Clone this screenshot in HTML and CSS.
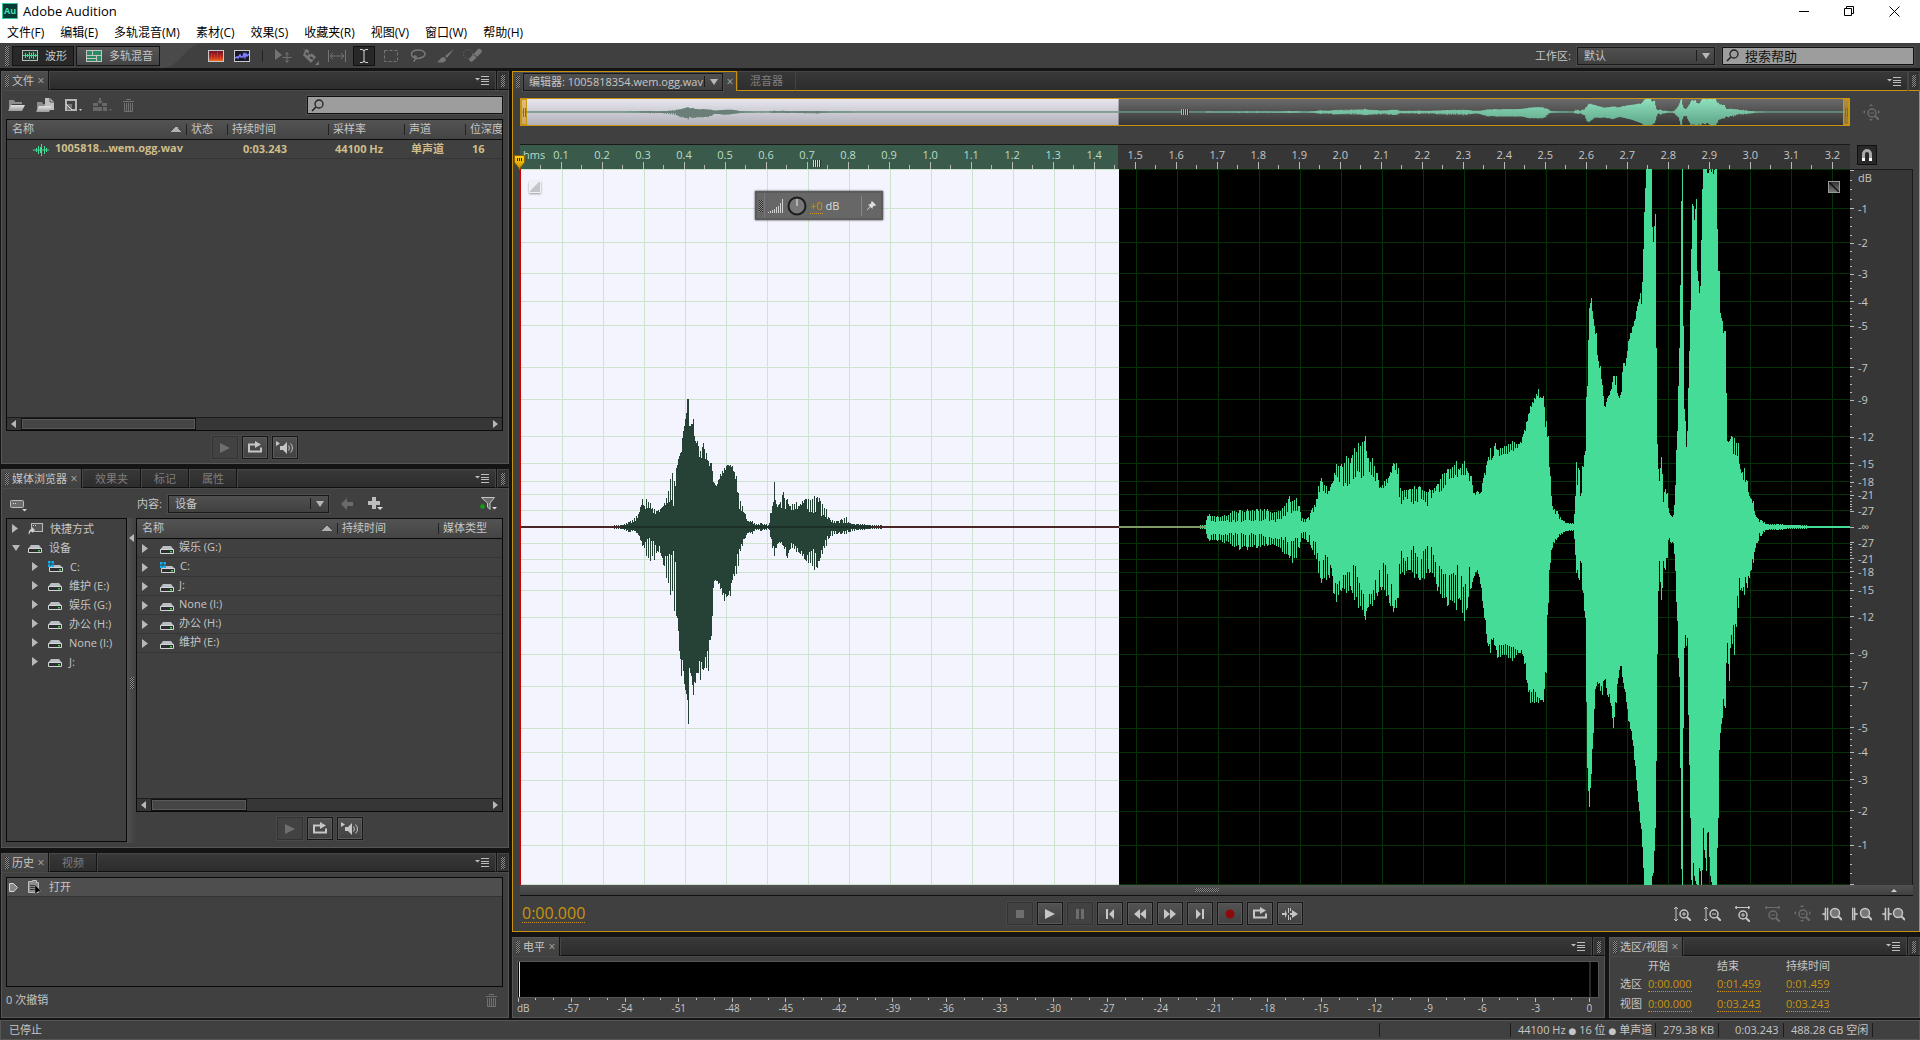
FILE: index.html
```html
<!DOCTYPE html>
<html lang="zh-CN">
<head>
  <meta charset="UTF-8">
  <meta name="viewport" content="width=device-width, initial-scale=1.0">
  <title>Adobe Audition</title>
  <link rel="stylesheet" href="styles.css">
</head>
<body>
  <svg class="sprite" aria-hidden="true">
    <defs>
      <linearGradient id="metal" x1="0" y1="0" x2="0" y2="1">
        <stop offset="0" stop-color="#e2e2e2"/><stop offset="1" stop-color="#9a9a9a"/>
      </linearGradient>
      <linearGradient id="fire" x1="0" y1="0" x2="0" y2="1">
        <stop offset="0" stop-color="#6c1428"/><stop offset=".6" stop-color="#b82a20"/><stop offset="1" stop-color="#f08020"/>
      </linearGradient>
      <linearGradient id="yellow" x1="0" y1="0" x2="0" y2="1">
        <stop offset="0" stop-color="#ffd21c"/><stop offset="1" stop-color="#c88f00"/>
      </linearGradient>
    </defs>
    <symbol id="i-wave" viewBox="0 0 16 12"><path d="M0 6h16M3.500 4v4M5.500 2v8M7.500 3v6M8.500 0v12M11.500 2v8M13.500 4v4" stroke="#45dc98" fill="none"/></symbol>
    <symbol id="i-waveform" viewBox="0 0 16 11"><rect x=".5" y=".5" width="15" height="10" fill="#1f3d30" stroke="#b9b9b9"/><path d="M1 5.500h14M3.500 3v5M5.500 4v3M7.500 2v7M9.500 3v5M11.500 2v7M13.500 4v3" stroke="#45dc98"/></symbol>
    <symbol id="i-multi" viewBox="0 0 16 12"><rect width="16" height="12" fill="#c4c4c4"/><path d="M1 1h5v4H1zM7 1h8v4H7zM1 6h9v2H1zM1 9h9v2H1zM11 6h4v5h-4z" fill="#2a8a61"/></symbol>
    <symbol id="i-spectral" viewBox="0 0 16 12"><rect x=".5" y=".5" width="15" height="11" fill="url(#fire)" stroke="#c9c9c9"/><path d="M3.500 3v8M6.500 4v7M9.500 2v9M12.500 5v6" stroke="#f0481c" opacity=".6"/></symbol>
    <symbol id="i-pitch" viewBox="0 0 16 12"><rect x=".5" y=".5" width="15" height="11" fill="#181828" stroke="#c9c9c9"/><path d="M1 8l2-1 1 1 2-3 1 2 2 0 1-4 1 4 1-3 1 2 2-2" fill="none" stroke="#8080ff" stroke-width="1.500"/></symbol>
    <symbol id="i-move" viewBox="0 0 18 14"><path d="M1 0l7 6-7 5z" fill="#737373"/><path d="M13 4v9M8.500 8.500h9M11.500 5.500l1.500-2 1.500 2M11.500 11.500l1.500 2 1.500-2" fill="none" stroke="#737373"/></symbol>
    <symbol id="i-razor" viewBox="0 0 18 18"><path d="M1 0l3 3 2-1 9 8-5 6-8-8 2-4z" fill="#777"/><path d="M5 6l2 2M8 5l2 2M9 10l3 2" stroke="#3c3c3c" stroke-width="2"/><path d="M18 14v4h-4z" fill="#777"/></symbol>
    <symbol id="i-slip" viewBox="0 0 18 12"><path d="M.5 0v12M17.500 0v12M2 6h14M5 3L2 6l3 3M13 3l3 3-3 3" fill="none" stroke="#737373"/></symbol>
    <symbol id="i-ibeam" viewBox="0 0 10 14"><path d="M1 .5h2l2 1 2-1h2M5 1v12M1 13.500h2l2-1 2 1h2" fill="none" stroke="#d6d6d6"/></symbol>
    <symbol id="i-marquee" viewBox="0 0 14 12"><rect x=".5" y=".5" width="13" height="11" fill="none" stroke="#777" stroke-dasharray="3 2"/></symbol>
    <symbol id="i-lasso" viewBox="0 0 16 14"><path d="M5 9C-1 7 1 1 8 1s9 5 5 7-8 2-9 0c0-2 3-1 2 1s-2 2-2 4" fill="none" stroke="#777" stroke-width="1.500"/></symbol>
    <symbol id="i-brush" viewBox="0 0 17 14"><path d="M17 0l-7 9-2-2zM7 8l2 2c0 4-5 4-9 3 3-1 3-5 7-5z" fill="#777"/></symbol>
    <symbol id="i-heal" viewBox="0 0 19 15"><path d="M7 10l8-9c3-1 5 2 3 4l-8 8c-3 2-5-1-3-3z" fill="#777"/><circle cx="5" cy="6" r="4.500" fill="none" stroke="#777" stroke-dasharray="1 2"/><path d="M11 7l3 2" stroke="#444"/></symbol>
    <symbol id="i-search" viewBox="0 0 13 13"><circle cx="8" cy="5" r="4" fill="none" stroke="#222" stroke-width="1.300"/><path d="M5 8L1 12" stroke="#222" stroke-width="1.600"/></symbol>
    <symbol id="i-menu" viewBox="0 0 14 9"><path d="M0 2h5L2.500 4.500z" fill="#bdbdbd"/><path d="M6 .5h8M6 3.500h8M6 5.500h8M6 8.500h8" stroke="#bdbdbd"/></symbol>
    <symbol id="i-open" viewBox="0 0 17 13"><path d="M1 11V1h5l1 2h7v2H4z" fill="#8d8d8d"/><path d="M0 12l3-6h14l-3 6z" fill="url(#metal)"/></symbol>
    <symbol id="i-import" viewBox="0 0 18 15"><path d="M1 13V4h5l1 2h9v2H4z" fill="#8d8d8d"/><path d="M9 0h5l4 4v8H9z" fill="#bdbdbd"/><path d="M14 0v4h4" fill="none" stroke="#555"/><path d="M0 14l3-6h13l-3 6z" fill="url(#metal)"/></symbol>
    <symbol id="i-new" viewBox="0 0 17 14"><rect x="1" y="2" width="10" height="10" fill="none" stroke="#b5b5b5" stroke-width="2"/><path d="M2 6h5v6H2z" fill="#777"/><path d="M1 6l6 6" stroke="#ddd"/><path d="M14 11h3l-1.500 2z" fill="#d0d0d0"/></symbol>
    <symbol id="i-insert" viewBox="0 0 19 14"><path d="M0 5h5v3H0zM9 5h5v3H9zM0 9h9v4H0zM10 9h4v4h-4zM6 0h2v3h2L7 6 4 3h2z" fill="#686868"/><path d="M16 11h3l-1.500 2z" fill="#686868"/></symbol>
    <symbol id="i-trash" viewBox="0 0 11 13"><path d="M0 2.500h11M3 .5h5M1.500 4v8.500h8V4M3.500 4v8M5.500 4v8M7.500 4v8" fill="none" stroke="#707070"/></symbol>
    <symbol id="i-play" viewBox="0 0 14 12"><path d="M2 1l10 5-10 5z"/></symbol>
    <symbol id="i-loop" viewBox="0 0 16 13"><path d="M6 3.500H2v7h12v-4" fill="none" stroke="currentColor" stroke-width="2"/><path d="M8 0l6 3.500L8 7z"/><path d="M6 3.500h4" stroke="currentColor" stroke-width="2"/></symbol>
    <symbol id="i-speaker" viewBox="0 0 18 14"><path d="M0 0l4 2.500L0 5zM4 5h3l4-4v12L7 9H4z"/><path d="M12.500 4.500q2 2.500 0 5M14.500 2.500q4 4.500 0 9" fill="none" stroke="currentColor"/></symbol>
    <symbol id="i-stop" viewBox="0 0 14 12"><path d="M3 2h8v8H3z"/></symbol>
    <symbol id="i-pause" viewBox="0 0 14 12"><path d="M3 1h3v10H3zM8 1h3v10H8z"/></symbol>
    <symbol id="i-start" viewBox="0 0 14 12"><path d="M3 1h2v10H3zM11 1v10L6 6z"/></symbol>
    <symbol id="i-rew" viewBox="0 0 14 12"><path d="M7 1v10L1 6zM13 1v10L7 6z"/></symbol>
    <symbol id="i-ff" viewBox="0 0 14 12"><path d="M1 1v10l6-5zM7 1v10l6-5z"/></symbol>
    <symbol id="i-end" viewBox="0 0 14 12"><path d="M3 1v10l5-5zM9 1h2v10H9z"/></symbol>
    <symbol id="i-rec" viewBox="0 0 14 12"><circle cx="7" cy="6" r="4.500" fill="#8c0a0e"/></symbol>
    <symbol id="i-skip" viewBox="0 0 16 12"><path d="M0 5h3V2l2 4-2 4V7H0zM10 2l6 4-6 4V7H8V5h2zM6 0h1v5H6zM6 7h1v5H6zM8 0h1v3H8zM8 9h1v3H8z"/></symbol>
    <symbol id="i-shortcut" viewBox="0 0 15 12"><rect x="3.500" y=".5" width="11" height="8" fill="#555" stroke="#bbb"/><path d="M5 2.500h1M7 2.500h1" stroke="#ccc"/><path d="M1 12C0 8 2 6 4 6V4l3 3-3 3V8C2 8 2 10 1 12z" fill="#d0d0d0"/></symbol>
    <symbol id="i-drive" viewBox="0 0 14 12"><path d="M3 3h8l3 4H0z" fill="#b9bec4"/><path d="M.5 6.500h13v4H.5z" fill="#2c2e30" stroke="#d2d5d8"/><path d="M10 8h2v1.500h-2z" fill="#2ce02c"/></symbol>
    <symbol id="i-sysdrive" viewBox="0 0 15 12"><path d="M4 4h8l3 3H1z" fill="#b9bec4"/><path d="M1.500 6.500h13v4h-13z" fill="#2c2e30" stroke="#d2d5d8"/><path d="M11 8h2v1.500h-2z" fill="#2ce02c"/><path d="M0 0h2.500v2.500H0zM3.500 0H6v2.500H3.500zM0 3.500h2.500V6H0zM3.500 3.500H6V6H3.500z" fill="#0ab0f5"/></symbol>
    <symbol id="i-device" viewBox="0 0 17 12"><rect x=".5" y=".5" width="13" height="7" rx="1" fill="#6c6c6c" stroke="#bcbcbc"/><path d="M3 3.500h1M5 3.500h1" stroke="#ddd"/><path d="M12 9h5l-2.500 2.500z" fill="#d0d0d0"/></symbol>
    <symbol id="i-back" viewBox="0 0 12 12"><path d="M0 6l6-6v4h6v4H6v4z" fill="#6b6b6b"/></symbol>
    <symbol id="i-plus" viewBox="0 0 15 13"><path d="M4 0h4v4h4v4H8v4H4V8H0V4h4z" fill="#bdbdbd"/><path d="M9 10h6l-3 3z" fill="#ddd"/></symbol>
    <symbol id="i-filter" viewBox="0 0 17 13"><path d="M1.500 .5h13L10 6v6.500L7.500 10V6z" fill="#6b6b6b" stroke="#c4c4c4"/><circle cx="2.500" cy="9.500" r="2.300" fill="#12a012"/><path d="M12 10h5l-2.500 2.500z" fill="#ddd"/></symbol>
    <symbol id="i-history" viewBox="0 0 13 14"><path d="M.5 1.500h4V.5h4v2h2v10H.5z" fill="#8c8c8c" stroke="#bdbdbd"/><path d="M2 5.500h6M2 7.500h6M2 9.500h5" stroke="#333"/><path d="M7 5l6 6-3 .5-3 2.500z" fill="#000" stroke="#999" stroke-width=".5"/></symbol>
    <symbol id="i-state" viewBox="0 0 9 9"><path d="M.5 .5h4L8.500 4.500 5 8.500H.5z" fill="#888" stroke="#d8d8d8"/></symbol>
    <symbol id="i-tri" viewBox="0 0 6 9"><path d="M0 0l6 4.500L0 9z" fill="#b8b8b8"/></symbol>
    <symbol id="i-tridown" viewBox="0 0 8 6"><path d="M0 0h8L4 6z" fill="#b8b8b8"/></symbol>
    <symbol id="i-glass" viewBox="0 0 12 12"><circle cx="5" cy="5" r="4" fill="none" stroke="currentColor" stroke-width="1.500"/><path d="M8 8l4 4" stroke="currentColor" stroke-width="2"/></symbol>
    <symbol id="i-vin" viewBox="0 0 17 16"><path d="M2 1v14M0 3l2-2 2 2M0 13l2 2 2-2" fill="none" stroke="currentColor"/><use href="#i-glass" x="5" y="3" width="12" height="12"/><path d="M8 8h4M10 6v4" stroke="currentColor"/></symbol>
    <symbol id="i-vout" viewBox="0 0 17 16"><path d="M2 1v14M0 3l2-2 2 2M0 13l2 2 2-2" fill="none" stroke="currentColor"/><use href="#i-glass" x="5" y="3" width="12" height="12"/><path d="M8 8h4" stroke="currentColor"/></symbol>
    <symbol id="i-hin" viewBox="0 0 17 16"><path d="M1 1.500h15M3 0L1 1.500 3 3M14 0l2 1.500L14 3" fill="none" stroke="currentColor"/><use href="#i-glass" x="4" y="4" width="12" height="12"/><path d="M7 9h4M9 7v4" stroke="currentColor"/></symbol>
    <symbol id="i-hout" viewBox="0 0 17 16"><path d="M1 1.500h15M3 0L1 1.500 3 3M14 0l2 1.500L14 3" fill="none" stroke="currentColor"/><use href="#i-glass" x="4" y="4" width="12" height="12"/><path d="M7 9h4" stroke="currentColor"/></symbol>
    <symbol id="i-full" viewBox="0 0 17 17"><path d="M0 8l2-2v4zM17 8l-2-2v4zM8 0l2 2H6zM8 17l2-2H6z" fill="currentColor"/><use href="#i-glass" x="4" y="4" width="12" height="12"/><path d="M7 9h4" stroke="currentColor"/></symbol>
    <symbol id="i-zleft" viewBox="0 0 20 14"><path d="M4 1H3v5L0 7l3 1v5h1M5 1h1v12H5z" fill="currentColor" stroke="currentColor" stroke-width=".6"/><circle cx="13" cy="6" r="4.500" fill="#777" stroke="currentColor" stroke-width="1.500"/><path d="M16 9l4 4" stroke="currentColor" stroke-width="2"/></symbol>
    <symbol id="i-zright" viewBox="0 0 20 14"><path d="M0 1h1v12H0zM2 1h1v5l3 1-3 1v5H2z" fill="currentColor" stroke="currentColor" stroke-width=".6"/><circle cx="13" cy="6" r="4.500" fill="#777" stroke="currentColor" stroke-width="1.500"/><path d="M16 9l4 4" stroke="currentColor" stroke-width="2"/></symbol>
    <symbol id="i-zsel" viewBox="0 0 23 14"><path d="M3 1v5L0 7l3 1v5h1V1zM6 1v12h1V8l3-1-3-1V1z" fill="currentColor" stroke="currentColor" stroke-width=".6"/><circle cx="16" cy="6" r="4.500" fill="#777" stroke="currentColor" stroke-width="1.500"/><path d="M19 9l4 4" stroke="currentColor" stroke-width="2"/></symbol>
    <symbol id="i-magnet" viewBox="0 0 12 12"><path d="M2.500 9V5a3.500 3.500 0 0 1 7 0v4" fill="none" stroke="#a8a8a8" stroke-width="3"/><path d="M1 9h3v3H1zM8 9h3v3H8z" fill="#fff"/></symbol>
  </svg>

  <header class="titlebar">
    <svg class="app-icon" width="16" height="16" viewBox="0 0 16 16"><rect x=".5" y=".5" width="15" height="15" fill="#073a35" stroke="#35c8a0"/><text x="2" y="11" class="app-letters">Au</text></svg>
    <h1>Adobe Audition</h1>
    <div class="window-buttons">
      <button type="button" aria-label="最小化"><svg width="11" height="11"><path d="M0 5.500h10"/></svg></button>
      <button type="button" aria-label="还原"><svg width="11" height="11"><path d="M.5 2.500h7v7h-7zM2.500 2.500v-2h7v7h-2"/></svg></button>
      <button type="button" aria-label="关闭"><svg width="11" height="11"><path d="M.5 .5l10 10M10.500 .5l-10 10"/></svg></button>
    </div>
  </header>

  <nav class="menubar">
    <a href="#">文件(F)</a>
    <a href="#">编辑(E)</a>
    <a href="#">多轨混音(M)</a>
    <a href="#">素材(C)</a>
    <a href="#">效果(S)</a>
    <a href="#">收藏夹(R)</a>
    <a href="#">视图(V)</a>
    <a href="#">窗口(W)</a>
    <a href="#">帮助(H)</a>
  </nav>

  <div class="toolbar">
    <span class="grip grip-tall"></span>
    <div class="views">
      <button type="button" class="view view-on"><svg width="16" height="11"><use href="#i-waveform"/></svg>波形</button>
      <button type="button" class="view"><svg width="16" height="12"><use href="#i-multi"/></svg>多轨混音</button>
    </div>
    <svg class="swoosh" width="44" height="25" viewBox="0 0 44 25"><path d="M0 0h44C24 1 22 24 2 25H0z"/></svg>
    <div class="displays">
      <button type="button" class="tool" aria-label="频谱"><svg width="16" height="12"><use href="#i-spectral"/></svg></button>
      <button type="button" class="tool" aria-label="音高"><svg width="16" height="12"><use href="#i-pitch"/></svg></button>
    </div>
    <div class="tools">
      <button type="button" class="tool" aria-label="移动"><svg width="18" height="14"><use href="#i-move"/></svg></button>
      <button type="button" class="tool" aria-label="切割"><svg width="18" height="18"><use href="#i-razor"/></svg></button>
      <button type="button" class="tool" aria-label="滑动"><svg width="18" height="12"><use href="#i-slip"/></svg></button>
      <button type="button" class="tool tool-on" aria-label="时间选区"><svg width="10" height="14"><use href="#i-ibeam"/></svg></button>
      <button type="button" class="tool" aria-label="框选"><svg width="14" height="12"><use href="#i-marquee"/></svg></button>
      <button type="button" class="tool" aria-label="套索"><svg width="16" height="14"><use href="#i-lasso"/></svg></button>
      <button type="button" class="tool" aria-label="画笔"><svg width="17" height="14"><use href="#i-brush"/></svg></button>
      <button type="button" class="tool" aria-label="污点修复"><svg width="19" height="15"><use href="#i-heal"/></svg></button>
    </div>
    <label for="workspace">工作区:</label>
    <span class="drop drop-workspace"><select id="workspace"><option>默认</option></select></span>
    <span class="search search-help">
      <svg width="13" height="13"><use href="#i-search"/></svg>
      <input type="text" value="搜索帮助" aria-label="搜索帮助">
    </span>
  </div>

  <main class="workspace">
    <div class="column">
      <section class="panel files">
        <div class="tabs">
          <div class="tab tab-on"><span class="grip"></span>文件<button type="button" class="close" aria-label="关闭">×</button></div>
          <div class="tab-rest"><svg width="14" height="9"><use href="#i-menu"/></svg></div>
          <div class="tab-end"><span class="grip"></span></div>
        </div>
        <div class="panel-body">
          <div class="files-bar">
            <button type="button" class="tool" aria-label="打开"><svg width="17" height="13"><use href="#i-open"/></svg></button>
            <button type="button" class="tool" aria-label="导入"><svg width="18" height="15"><use href="#i-import"/></svg></button>
            <button type="button" class="tool" aria-label="新建"><svg width="17" height="14"><use href="#i-new"/></svg></button>
            <button type="button" class="tool" aria-label="插入"><svg width="19" height="14"><use href="#i-insert"/></svg></button>
            <button type="button" class="tool" aria-label="删除"><svg width="11" height="13"><use href="#i-trash"/></svg></button>
            <span class="search search-files">
              <svg width="13" height="13"><use href="#i-search"/></svg>
              <input type="text" aria-label="搜索文件">
            </span>
          </div>
          <div class="box">
            <table class="list files-list">
              <thead>
                <tr><th class="c-name sorted">名称</th><th class="c-state">状态</th><th class="c-time">持续时间</th><th class="c-rate">采样率</th><th class="c-chan">声道</th><th class="c-bits">位深度</th></tr>
              </thead>
              <tbody>
                <tr><td class="file-name"><svg width="16" height="12"><use href="#i-wave"/></svg>1005818...wem.ogg.wav</td><td></td><td class="file-time">0:03.243</td><td>44100 Hz</td><td>单声道</td><td>16</td></tr>
              </tbody>
            </table>
            <div class="hscroll"><i class="arrow-left"></i><i class="thumb thumb-files"></i><i class="arrow-right"></i></div>
          </div>
          <div class="preview">
            <button type="button" class="btn" disabled aria-label="播放"><svg width="14" height="12"><use href="#i-play"/></svg></button>
            <button type="button" class="btn" aria-label="循环"><svg width="16" height="13"><use href="#i-loop"/></svg></button>
            <button type="button" class="btn" aria-label="自动播放"><svg width="18" height="14"><use href="#i-speaker"/></svg></button>
          </div>
        </div>
      </section>

      <section class="panel media">
        <div class="tabs">
          <div class="tab tab-on"><span class="grip"></span>媒体浏览器<button type="button" class="close" aria-label="关闭">×</button></div>
          <div class="tab tab-58">效果夹</div>
          <div class="tab tab-48">标记</div>
          <div class="tab tab-48">属性</div>
          <div class="tab-rest"><svg width="14" height="9"><use href="#i-menu"/></svg></div>
          <div class="tab-end"><span class="grip"></span></div>
        </div>
        <div class="panel-body">
          <div class="media-bar">
            <button type="button" class="tool media-device" aria-label="驱动器"><svg width="17" height="12"><use href="#i-device"/></svg></button>
            <label for="content">内容:</label>
            <span class="drop drop-content"><select id="content"><option>设备</option></select></span>
            <button type="button" class="tool" aria-label="后退"><svg width="12" height="12"><use href="#i-back"/></svg></button>
            <button type="button" class="tool" aria-label="添加"><svg width="15" height="13"><use href="#i-plus"/></svg></button>
            <button type="button" class="tool media-filter" aria-label="过滤"><svg width="17" height="13"><use href="#i-filter"/></svg></button>
          </div>
          <div class="media-split">
            <ul class="box tree">
              <li><svg width="6" height="9"><use href="#i-tri"/></svg><svg class="drive" width="15" height="12"><use href="#i-shortcut"/></svg>快捷方式</li>
              <li><svg class="open" width="8" height="6"><use href="#i-tridown"/></svg><svg class="drive" width="14" height="12"><use href="#i-drive"/></svg>设备</li>
              <li class="sub"><svg width="6" height="9"><use href="#i-tri"/></svg><svg class="drive" width="15" height="12"><use href="#i-sysdrive"/></svg>C:</li>
              <li class="sub"><svg width="6" height="9"><use href="#i-tri"/></svg><svg class="drive" width="14" height="12"><use href="#i-drive"/></svg>维护 (E:)</li>
              <li class="sub"><svg width="6" height="9"><use href="#i-tri"/></svg><svg class="drive" width="14" height="12"><use href="#i-drive"/></svg>娱乐 (G:)</li>
              <li class="sub"><svg width="6" height="9"><use href="#i-tri"/></svg><svg class="drive" width="14" height="12"><use href="#i-drive"/></svg>办公 (H:)</li>
              <li class="sub"><svg width="6" height="9"><use href="#i-tri"/></svg><svg class="drive" width="14" height="12"><use href="#i-drive"/></svg>None (I:)</li>
              <li class="sub"><svg width="6" height="9"><use href="#i-tri"/></svg><svg class="drive" width="14" height="12"><use href="#i-drive"/></svg>J:</li>
            </ul>
            <div class="splitter"><i class="arrow-left"></i><span class="grip"></span></div>
            <div class="media-right">
              <div class="box">
                <table class="list">
                  <thead>
                    <tr><th class="sorted">名称</th><th class="c-dur">持续时间</th><th class="c-type">媒体类型</th></tr>
                  </thead>
                  <tbody>
                    <tr><td><svg width="6" height="9"><use href="#i-tri"/></svg><svg class="drive" width="14" height="12"><use href="#i-drive"/></svg>娱乐 (G:)</td><td></td><td></td></tr>
                    <tr><td><svg width="6" height="9"><use href="#i-tri"/></svg><svg class="drive" width="15" height="12"><use href="#i-sysdrive"/></svg>C:</td><td></td><td></td></tr>
                    <tr><td><svg width="6" height="9"><use href="#i-tri"/></svg><svg class="drive" width="14" height="12"><use href="#i-drive"/></svg>J:</td><td></td><td></td></tr>
                    <tr><td><svg width="6" height="9"><use href="#i-tri"/></svg><svg class="drive" width="14" height="12"><use href="#i-drive"/></svg>None (I:)</td><td></td><td></td></tr>
                    <tr><td><svg width="6" height="9"><use href="#i-tri"/></svg><svg class="drive" width="14" height="12"><use href="#i-drive"/></svg>办公 (H:)</td><td></td><td></td></tr>
                    <tr><td><svg width="6" height="9"><use href="#i-tri"/></svg><svg class="drive" width="14" height="12"><use href="#i-drive"/></svg>维护 (E:)</td><td></td><td></td></tr>
                  </tbody>
                </table>
                <div class="hscroll"><i class="arrow-left"></i><i class="thumb thumb-media"></i><i class="arrow-right"></i></div>
              </div>
              <div class="preview">
                <button type="button" class="btn" disabled aria-label="播放"><svg width="14" height="12"><use href="#i-play"/></svg></button>
                <button type="button" class="btn" aria-label="循环"><svg width="16" height="13"><use href="#i-loop"/></svg></button>
                <button type="button" class="btn" aria-label="自动播放"><svg width="18" height="14"><use href="#i-speaker"/></svg></button>
              </div>
            </div>
          </div>
        </div>
      </section>

      <section class="panel history">
        <div class="tabs">
          <div class="tab tab-on"><span class="grip"></span>历史<button type="button" class="close" aria-label="关闭">×</button></div>
          <div class="tab tab-48">视频</div>
          <div class="tab-rest"><svg width="14" height="9"><use href="#i-menu"/></svg></div>
          <div class="tab-end"><span class="grip"></span></div>
        </div>
        <div class="panel-body">
          <ul class="box states">
            <li><svg width="9" height="9"><use href="#i-state"/></svg><svg width="13" height="14"><use href="#i-history"/></svg>打开</li>
          </ul>
          <div class="history-foot">
            <span>0 次撤销</span>
            <button type="button" class="tool" aria-label="删除"><svg width="11" height="13"><use href="#i-trash"/></svg></button>
          </div>
        </div>
      </section>
    </div>

    <div class="column">
      <section class="panel editor">
        <div class="tabs">
          <div class="tab tab-on">
            <span class="grip"></span>
            <span class="drop drop-file"><select aria-label="编辑器"><option>编辑器: 1005818354.wem.ogg.wav</option></select></span>
            <button type="button" class="close" aria-label="关闭">×</button>
          </div>
          <div class="tab tab-58">混音器</div>
          <div class="tab-rest"><svg width="14" height="9"><use href="#i-menu"/></svg></div>
          <div class="tab-end"><span class="grip"></span></div>
        </div>
        <div class="panel-body">
          <div class="stage">
            <div class="overview">
              <svg id="overview" width="100%" height="100%" viewBox="0 0 1329 715" preserveAspectRatio="none"></svg>
              <i class="handle handle-left"></i>
              <i class="handle-middle"></i>
              <i class="handle handle-right"></i>
            </div>
            <button type="button" class="tool zoom-off" aria-label="全部缩小"><svg width="17" height="17"><use href="#i-full"/></svg></button>

            <div class="ruler">
              <svg id="ruler" width="100%" height="100%"></svg>
              <span class="ruler-grip"></span>
              <svg class="playhead" width="11" height="15" viewBox="0 0 11 15"><path d="M.5 .5h10v7L6 13v2H5v-2L.5 7.500z" fill="url(#yellow)" stroke="#8c6500"/><path d="M3.500 3v3M5.500 3v3M7.500 3v3" stroke="#3b2b00"/></svg>
            </div>
            <button type="button" class="magnet" aria-label="吸附"><svg width="12" height="12"><use href="#i-magnet"/></svg></button>

            <div class="canvas">
              <svg id="wave" width="100%" height="100%" viewBox="0 0 1329 715" preserveAspectRatio="none"></svg>
              <svg class="fade fade-in" width="12" height="12"><path d="M1 11V10L10 1h1v10z" fill="#c3c3ca"/></svg>
              <svg class="fade fade-out" width="12" height="12"><path d="M0 0l12 12" stroke="#111" stroke-width="1.500"/></svg>
              <div class="hud">
                <span class="hud-grip"><span class="grip"></span></span>
                <svg width="16" height="14"><path d="M.5 14v-1M2.500 14v-2M4.500 14v-3M6.500 14v-4M8.500 14v-6M10.500 14v-7M12.500 14v-10M14.500 14v-14" stroke="#d0d0d0"/></svg>
                <svg width="20" height="20"><circle cx="10" cy="10" r="8.500" fill="#777" stroke="#1c1c1c" stroke-width="2"/><path d="M10 3v7" stroke="#eee"/></svg>
                <span class="hud-value"><button type="button" class="hot">+0</button> dB</span>
                <button type="button" class="tool hud-pin" aria-label="固定"><svg width="9" height="9"><path d="M5 0l4 4-1 1-1-.5-1.500 2V8L3.500 6 .5 9 0 8.500 3 5.500 1 3.500h1.500l2-1.500L4 1z" fill="#e0e0e0"/></svg></button>
              </div>
            </div>
            <div class="scale"><svg id="scale" width="100%" height="100%"></svg></div>
            <div class="stage-foot"><span class="grip grip-wide"></span><i class="arrow-up"></i></div>
          </div>

          <div class="transport">
            <button type="button" class="hot clock">0:00.000</button>
            <div class="buttons">
              <button type="button" class="btn" disabled aria-label="停止"><svg width="14" height="12"><use href="#i-stop"/></svg></button>
              <button type="button" class="btn" aria-label="播放"><svg width="14" height="12"><use href="#i-play"/></svg></button>
              <button type="button" class="btn" disabled aria-label="暂停"><svg width="14" height="12"><use href="#i-pause"/></svg></button>
              <button type="button" class="btn" aria-label="到开头"><svg width="14" height="12"><use href="#i-start"/></svg></button>
              <button type="button" class="btn" aria-label="倒放"><svg width="14" height="12"><use href="#i-rew"/></svg></button>
              <button type="button" class="btn" aria-label="快进"><svg width="14" height="12"><use href="#i-ff"/></svg></button>
              <button type="button" class="btn" aria-label="到结尾"><svg width="14" height="12"><use href="#i-end"/></svg></button>
              <button type="button" class="btn" aria-label="录音"><svg width="14" height="12"><use href="#i-rec"/></svg></button>
              <button type="button" class="btn" aria-label="循环"><svg width="16" height="13"><use href="#i-loop"/></svg></button>
              <button type="button" class="btn" aria-label="跳过选区"><svg width="16" height="12"><use href="#i-skip"/></svg></button>
            </div>
            <div class="zooms">
              <button type="button" class="tool" aria-label="垂直放大"><svg width="17" height="16"><use href="#i-vin"/></svg></button>
              <button type="button" class="tool" aria-label="垂直缩小"><svg width="17" height="16"><use href="#i-vout"/></svg></button>
              <button type="button" class="tool" aria-label="水平放大"><svg width="17" height="16"><use href="#i-hin"/></svg></button>
              <button type="button" class="tool dim" aria-label="水平缩小"><svg width="17" height="16"><use href="#i-hout"/></svg></button>
              <button type="button" class="tool dim" aria-label="全部缩小"><svg width="17" height="17"><use href="#i-full"/></svg></button>
              <button type="button" class="tool" aria-label="放大入点"><svg width="20" height="14"><use href="#i-zleft"/></svg></button>
              <button type="button" class="tool" aria-label="放大出点"><svg width="20" height="14"><use href="#i-zright"/></svg></button>
              <button type="button" class="tool" aria-label="缩放至选区"><svg width="23" height="14"><use href="#i-zsel"/></svg></button>
            </div>
          </div>
        </div>
      </section>

      <div class="bottom">
        <section class="panel levels">
          <div class="tabs">
            <div class="tab tab-on"><span class="grip"></span>电平<button type="button" class="close" aria-label="关闭">×</button></div>
            <div class="tab-rest"><svg width="14" height="9"><use href="#i-menu"/></svg></div>
            <div class="tab-end"><span class="grip"></span></div>
          </div>
          <div class="panel-body">
            <div class="meter"><svg width="100%" height="100%"><path d="M.5 0v40" stroke="#ff0"/><line x1="99.260%" x2="99.260%" y1="0" y2="100%" stroke="#555"/></svg></div>
            <svg id="meter-scale" width="100%" height="20"></svg>
          </div>
        </section>

        <section class="panel selection">
          <div class="tabs">
            <div class="tab tab-on"><span class="grip"></span>选区/视图<button type="button" class="close" aria-label="关闭">×</button></div>
            <div class="tab-rest"><svg width="14" height="9"><use href="#i-menu"/></svg></div>
            <div class="tab-end"><span class="grip"></span></div>
          </div>
          <div class="panel-body">
            <table class="times">
              <tr><td></td><th>开始</th><th>结束</th><th>持续时间</th></tr>
              <tr><th>选区</th><td><button type="button" class="hot">0:00.000</button></td><td><button type="button" class="hot">0:01.459</button></td><td><button type="button" class="hot">0:01.459</button></td></tr>
              <tr><th>视图</th><td><button type="button" class="hot">0:00.000</button></td><td><button type="button" class="hot">0:03.243</button></td><td><button type="button" class="hot">0:03.243</button></td></tr>
            </table>
          </div>
        </section>
      </div>
    </div>
  </main>

  <footer class="statusbar">
    <span class="status">已停止</span>
    <span class="cell cell-blank"></span>
    <span class="cell cell-format">44100 Hz <span class="dot">●</span> 16 位 <span class="dot">●</span> 单声道</span>
    <span class="cell cell-size">279.38 KB</span>
    <span class="cell cell-length">0:03.243</span>
    <span class="cell cell-free">488.28 GB 空闲</span>
    <span class="cell cell-last"></span>
  </footer>

  <script src="wave.js"></script>
</body>
</html>
```

FILE: styles.css
```css
* {
  box-sizing: border-box;
}
body {
  display: flex;
  flex-direction: column;
  height: 100vh;
  margin: 0;
  overflow: hidden;
  background-color: #141414;
  color: #c6c6c6;
  font-family: "Open Sans", "Noto Sans CJK SC", sans-serif;
  font-size: 11px;
  line-height: 16px;
}
button, input, select {
  margin: 0;
  padding: 0;
  border: none;
  background: none;
  color: inherit;
  font: inherit;
}
svg {
  display: block;
  flex-shrink: 0;
}
a {
  color: inherit;
  text-decoration: none;
}
ul {
  margin: 0;
  padding: 0;
  list-style: none;
}
.sprite {
  position: absolute;
  width: 0;
  height: 0;
}

/* title + menu */
.titlebar {
  display: flex;
  align-items: center;
  flex-shrink: 0;
  height: 22px;
  padding: 0 3px 0 2px;
  background-color: #fff;
  color: #000;
}
.titlebar h1 {
  flex: 1;
  margin: 0;
  padding-left: 5px;
  font-size: 13px;
  font-weight: normal;
}
.app-letters {
  fill: #3fdcae;
  font-size: 9px;
  font-weight: bold;
}
.window-buttons {
  display: flex;
}
.window-buttons button {
  display: flex;
  align-items: center;
  justify-content: center;
  width: 45px;
  height: 22px;
}
.window-buttons path {
  fill: none;
  stroke: #000;
}
.menubar {
  display: flex;
  flex-shrink: 0;
  gap: 16px;
  height: 21px;
  padding-left: 7px;
  background-color: #fff;
  color: #000;
  font-size: 12px;
  line-height: 22px;
}

/* shared bits */
.grip {
  flex-shrink: 0;
  width: 4px;
  height: 12px;
  background: repeating-conic-gradient(#8c8c8c 0 25%, #2a2a2a 0 50%) 0 0 / 2px 2px;
}
.grip-tall {
  height: 20px;
}
.grip-wide {
  width: 24px;
  height: 4px;
}
.tool {
  display: flex;
  align-items: center;
  justify-content: center;
}
.dim {
  color: #6c6c6c;
}
.hot {
  border-bottom: 1px dotted #c8940f;
  color: #c8940f;
  line-height: 14px;
}
.btn {
  display: flex;
  align-items: center;
  justify-content: center;
  width: 26px;
  height: 23px;
  border: 1px solid #161616;
  background: linear-gradient(#535353, #414141);
  box-shadow: inset 0 0 0 1px #5a5a5a, 0 0 0 1px #484848;
  color: #c6c6c6;
  fill: currentColor;
}
.btn:disabled {
  border-color: #333;
  background: #424242;
  box-shadow: 0 0 0 1px #484848;
  color: #6e6e6e;
}
.drop {
  display: flex;
  align-items: center;
  position: relative;
  height: 18px;
  border: 1px solid #181818;
  background: linear-gradient(#505050, #404040);
  box-shadow: 0 0 0 1px #4c4c4c;
}
.drop select {
  width: 100%;
  height: 16px;
  padding: 0 20px 0 6px;
  appearance: none;
}
.drop::before,
.drop::after {
  content: "";
  position: absolute;
  pointer-events: none;
}
.drop::before {
  right: 17px;
  height: 11px;
  border-left: 1px solid #1c1c1c;
}
.drop::after {
  right: 4px;
  border: 4px solid transparent;
  border-top: 6px solid #b8b8b8;
  border-bottom: none;
}
.search {
  display: flex;
  align-items: center;
  gap: 9px;
  height: 18px;
  padding-left: 3px;
  border: 1px solid #111;
  background-color: #9d9d9d;
  box-shadow: 0 0 0 1px #4c4c4c;
  color: #111;
}
.search input {
  flex: 1;
  min-width: 0;
  outline: none;
}
.arrow-left,
.arrow-right,
.arrow-up {
  border: 4px solid transparent;
}
.arrow-left {
  border-right: 5px solid #b8b8b8;
  border-left: none;
}
.arrow-right {
  margin-left: auto;
  border-left: 5px solid #b8b8b8;
  border-right: none;
}
.arrow-up {
  border-width: 3px;
  border-top: none;
  border-bottom-color: #d0d0d0;
}

/* toolbar */
.toolbar {
  display: flex;
  align-items: center;
  flex-shrink: 0;
  height: 25px;
  padding: 0 6px 0 5px;
  background-color: #404040;
}
.views {
  display: flex;
  gap: 2px;
  padding-left: 3px;
}
.view {
  display: flex;
  align-items: center;
  gap: 7px;
  height: 20px;
  padding: 0 6px 0 9px;
  border: 1px solid #141414;
  background: linear-gradient(#565656, #444);
}
.view-on {
  background: #282828;
}
.swoosh {
  fill: #4a4a4a;
}
.displays {
  display: flex;
  gap: 10px;
  padding: 0 12px 0 4px;
  border-right: 1px solid #222;
}
.tools {
  display: flex;
  align-items: center;
  gap: 5px;
  flex: 1;
  padding-left: 9px;
}
.tools .tool {
  width: 22px;
  height: 20px;
}
.tools .tool-on {
  border: 1px solid #111;
  background-color: #282828;
}
.drop-workspace {
  width: 138px;
  margin: 0 7px 0 6px;
}
.search-help {
  width: 192px;
  gap: 6px;
  font-size: 13px;
}

/* panels */
.workspace {
  display: grid;
  grid-template-columns: 508fr 1408fr;
  flex: 1;
  gap: 3px;
  min-height: 0;
  padding: 3px 0 2px 1px;
}
.column {
  display: flex;
  flex-direction: column;
  gap: 5px;
  min-width: 0;
  min-height: 0;
}
.panel {
  display: flex;
  flex-direction: column;
  min-width: 0;
  min-height: 0;
}
.files {
  flex: 393 1 0;
}
.media {
  flex: 379 1 0;
}
.history {
  flex: 165 1 0;
}
.tabs {
  display: flex;
  flex-shrink: 0;
  height: 19px;
}
.tab {
  display: flex;
  align-items: center;
  justify-content: center;
  border: 1px solid #484848;
  border-width: 1px 0 1px 1px;
  border-bottom-color: #101010;
  margin-right: 1px;
  background: linear-gradient(#373737, #2d2d2d);
  color: #7e7e7e;
}
.tab-on {
  gap: 3px;
  padding: 0 3px;
  border-color: #565656;
  border-bottom: none;
  background: linear-gradient(#4c4c4c, #404040);
  color: #c6c6c6;
}
.tab-48 {
  width: 47px;
}
.tab-58 {
  width: 58px;
}
.tab-rest {
  display: flex;
  align-items: center;
  justify-content: flex-end;
  flex: 1;
  padding-right: 6px;
  border: 1px solid #454545;
  border-bottom-color: #101010;
  background: linear-gradient(#393939, #2c2c2c);
}
.tab-end {
  display: flex;
  align-items: center;
  justify-content: center;
  width: 12px;
  border: 1px solid #454545;
  border-bottom-color: #101010;
  margin-left: 1px;
  background: #343434;
}
.close {
  width: 8px;
  color: #a8a8a8;
  font-size: 12px;
  line-height: 12px;
}
.panel-body {
  display: flex;
  flex-direction: column;
  flex: 1;
  min-height: 0;
  padding: 0 5px 4px 4px;
  border: 1px solid #565656;
  border-top-color: #4a4a4a;
  background-color: #404040;
}
.box {
  display: flex;
  flex-direction: column;
  flex: 1;
  min-height: 0;
  border: 1px solid #0a0a0a;
  background-color: #404040;
}
.files-bar {
  display: flex;
  align-items: center;
  gap: 11px;
  height: 28px;
  padding-left: 2px;
}
.search-files {
  width: 196px;
  margin-left: auto;
}
.list {
  width: 100%;
  border-collapse: collapse;
  table-layout: fixed;
  white-space: nowrap;
}
.list th {
  height: 19px;
  padding: 0 0 0 5px;
  overflow: hidden;
  border-bottom: 1px solid #0c0c0c;
  background:
    linear-gradient(#222, #222) 0 50% / 1px 11px no-repeat,
    linear-gradient(#535353, #444);
  font-weight: normal;
  text-align: left;
}
.list .sorted {
  background:
    conic-gradient(from 135deg at 50% 0, #b0b0b0 90deg, transparent 0) right 4px center / 12px 6px no-repeat,
    linear-gradient(#535353, #444);
}
.list td {
  height: 19px;
  padding: 0 0 0 7px;
  border-bottom: 1px solid #353535;
  line-height: 14px;
}
.list td svg {
  display: inline-block;
  vertical-align: middle;
}
.list td:first-child {
  padding-left: 5px;
}
.c-state {
  width: 41px;
}
.c-time {
  width: 101px;
}
.c-rate {
  width: 76px;
}
.c-chan {
  width: 61px;
}
.c-bits {
  width: 37px;
}
.files-list td {
  color: #cfbd8a;
  font-weight: bold;
}
.list .file-name:first-child {
  padding-left: 26px;
}
.file-name svg {
  margin-right: 6px;
}
.files-list .file-time {
  padding-left: 16px;
}
.c-dur {
  width: 101px;
}
.c-type {
  width: 64px;
}
.hscroll {
  display: flex;
  align-items: center;
  height: 13px;
  padding: 0 4px;
  border-top: 1px solid #1c1c1c;
  margin-top: auto;
  background-color: #363636;
}
.thumb {
  height: 12px;
  margin-left: 5px;
  border: 1px solid #111;
  background: #454545;
  box-shadow: inset 0 0 0 1px #5a5a5a;
}
.thumb-files {
  width: 36%;
}
.thumb-media {
  width: 27%;
}
.preview {
  display: flex;
  justify-content: center;
  gap: 4px;
  padding-top: 5px;
}
.media .preview {
  padding-bottom: 3px;
}
.media-bar {
  display: flex;
  align-items: center;
  height: 29px;
}
.media-bar .tool {
  margin-right: 15px;
}
.media-bar .media-device {
  margin: 4px 110px 0 4px;
}
.media-bar .media-filter {
  margin: 0 6px 0 auto;
}
.drop-content {
  width: 161px;
  margin: 0 12px 0 6px;
}
.media-split {
  display: flex;
  flex: 1;
  min-height: 0;
}
.tree {
  flex: 0 0 121px;
  margin-bottom: 1px;
}
.tree li {
  display: flex;
  align-items: center;
  height: 19px;
  padding-left: 5px;
}
.tree .sub {
  padding-left: 25px;
}
.drive {
  margin: 0 7px 0 10px;
}
.list .drive {
  margin: 0 5px 0 12px;
}
.open + .drive {
  margin-left: 8px;
}
.splitter {
  display: flex;
  flex-direction: column;
  align-items: center;
  flex: 0 0 9px;
  padding-top: 16px;
  background: linear-gradient(90deg, #505050, #404040);
}
.splitter .grip {
  margin: auto 0 154px;
}
.media-right {
  display: flex;
  flex-direction: column;
  flex: 1;
  min-width: 0;
}
.history .panel-body {
  padding-top: 4px;
}
.states li {
  display: flex;
  align-items: center;
  gap: 8px;
  height: 19px;
  padding-left: 2px;
  border-bottom: 1px solid #343434;
  background-color: #4e4e4e;
}
.states svg + svg {
  margin-left: 2px;
}
.history-foot {
  display: flex;
  align-items: center;
  justify-content: space-between;
  height: 26px;
  padding-right: 6px;
}

/* editor */
.editor {
  flex: 1;
}
.editor .tabs {
  height: 20px;
}
.editor .tab-on {
  padding: 0 2px 0 3px;
  border: 1px solid #c8940f;
  border-bottom: none;
}
.editor .drop-file {
  width: 200px;
}
.drop-file select {
  padding: 0 17px 0 5px;
}
.editor .tab,
.editor .tab-rest,
.editor .tab-end {
  margin-right: 0;
  margin-left: 0;
  border-bottom-color: #c8940f;
}
.editor .panel-body {
  padding: 7px 6px 0 7px;
  border-color: #c8940f;
  border-top: none;
}
.stage {
  display: grid;
  grid-template-columns: 1fr 63px;
  grid-template-rows: 28px 18px 25px 1fr 11px;
  flex: 1;
  min-height: 0;
}
.overview {
  position: relative;
  border: 1px solid #c8940f;
  background:
    linear-gradient(#e8e6ef, #b2b0b8) 0 0 / 45% 100% no-repeat,
    linear-gradient(#6a6a6a, #363636);
}
.handle {
  position: absolute;
  top: 0;
  bottom: 0;
  width: 6px;
  border: 1px solid #c8940f;
  background: linear-gradient(90deg, transparent 1px, #8a6a20 1px 2px, transparent 2px 3px, #8a6a20 3px) 0 50% / 100% 9px no-repeat rgba(216, 165, 45, 0.6);
}
.handle-left {
  left: 0;
}
.handle-right {
  right: 0;
}
.handle-middle {
  position: absolute;
  top: 10px;
  left: 50%;
  width: 8px;
  height: 6px;
  margin-left: -4px;
  background: repeating-linear-gradient(90deg, #b5b5b5 0 1px, #333 1px 2px);
}
.zoom-off {
  width: 42px;
  color: #6c6c6c;
}
.ruler {
  grid-row: 3;
  position: relative;
  border-top: 1px solid #1a1a1a;
  background: linear-gradient(90deg, #3a5b4b 45%, #363636 45%);
}
.ruler text,
.scale text,
#meter-scale text {
  fill: #c6c6c6;
}
.ruler .in-selection {
  fill: #b9dcc8;
}
.tick {
  stroke: #b9b9b9;
  shape-rendering: crispEdges;
}
.ruler-grip {
  position: absolute;
  top: 15px;
  left: 22%;
  width: 8px;
  height: 7px;
  background: repeating-linear-gradient(90deg, #cfd8d2 0 1px, #24352c 1px 2px);
}
.playhead {
  position: absolute;
  top: 10px;
  left: -6px;
}
.magnet {
  grid-row: 3;
  display: flex;
  align-items: center;
  justify-content: center;
  width: 20px;
  height: 20px;
  margin: 1px 0 0 7px;
  border: 1px solid #111;
  background-color: #282828;
}
.canvas {
  grid-row: 4;
  position: relative;
  min-height: 0;
  border-left: 1px solid #d00000;
  overflow: hidden;
}
.fade {
  position: absolute;
  top: 12px;
}
.fade-in {
  left: 8px;
  background: #f0f0f4;
  box-shadow: 0 1px 2px #999;
}
.fade-out {
  right: 10px;
  border: 1px solid #999;
  background: linear-gradient(#333, #777);
}
.hud {
  position: absolute;
  top: 22px;
  left: 234px;
  display: flex;
  align-items: center;
  gap: 3px;
  width: 128px;
  height: 29px;
  border: 2px solid rgba(90, 90, 90, 0.9);
  background-color: rgba(93, 93, 93, 0.94);
  box-shadow: 0 0 2px #333;
}
.hud-grip {
  display: flex;
  align-items: center;
  justify-content: center;
  width: 8px;
  height: 25px;
  border-right: 1px solid #777;
}
.hud-value {
  flex: 1;
  color: #ddd;
}
.hud-pin {
  width: 20px;
  height: 20px;
  border-left: 1px solid #858585;
}
.scale {
  grid-row: 4;
  border: 1px solid #1a1a1a;
  border-width: 1px 1px 0 0;
  background-color: #363636;
}
.stage-foot {
  grid-row: 5;
  grid-column: 1 / 3;
  display: flex;
  align-items: center;
  justify-content: space-between;
  padding-right: 16px;
  border-bottom: 1px solid #111;
  background: linear-gradient(#525252, #404040);
}
.stage-foot .grip {
  margin-left: 49%;
}
.transport {
  display: flex;
  align-items: center;
  flex-shrink: 0;
  height: 35px;
}
.transport .clock {
  margin-left: 2px;
  font-size: 16px;
  line-height: 18px;
}
.buttons {
  display: flex;
  justify-content: center;
  flex: 1;
  gap: 4px;
  padding-left: 52px;
}
.zooms {
  display: flex;
  gap: 10px;
  padding-right: 8px;
}
.zooms .tool {
  min-width: 20px;
}

/* bottom row */
.bottom {
  display: flex;
  flex-shrink: 0;
  gap: 4px;
  height: 81px;
}
.levels {
  flex: 1;
}
.levels .panel-body {
  padding: 4px 5px 0 4px;
}
.meter {
  height: 37px;
  padding-left: 1px;
  border: 1px solid #555;
  background-color: #000;
}
#meter-scale {
  font-size: 10px;
}
.selection {
  width: 311px;
}
.selection .panel-body {
  padding: 0 0 0 10px;
}
.times {
  align-self: flex-start;
  border-collapse: collapse;
  line-height: 14px;
}
.times th,
.times td {
  width: 69px;
  height: 20px;
  padding: 0;
  font-weight: normal;
  text-align: left;
}
.times tr:first-child > * {
  height: 17px;
}
.times tr > :first-child {
  width: 28px;
}
.statusbar {
  display: flex;
  align-items: center;
  flex-shrink: 0;
  height: 20px;
  border: 1px solid #565656;
  background-color: #404040;
  line-height: 14px;
}
.status {
  flex: 1;
  padding-left: 8px;
}
.cell {
  height: 14px;
  padding-left: 7px;
  border-left: 1px solid #1c1c1c;
  white-space: nowrap;
}
.cell-blank {
  width: 131px;
}
.cell-format {
  width: 145px;
}
.dot {
  font-family: "DejaVu Sans", sans-serif;
  font-size: 9px;
}
.cell-size {
  width: 63px;
}
.cell-length {
  width: 65px;
  padding-left: 16px;
}
.cell-free {
  width: 89px;
}
.cell-last {
  width: 47px;
}
```

FILE: wave.js
```js
const NS = 'http://www.w3.org/2000/svg'
const WIDTH = 1329
const HEIGHT = 715
const MID = 357
const LENGTH = 3.243
const SELECTED = 1.459

// three samples per column: sample, peak up, low up, peak down, low down
const bursts = [
  { start: 80, data: `0 0 0 0 0|60 1 0 1 0|70 2 1 2 1|85 4 2 4 2|100 8 3 3 2|115 14 10 8 7|125 27 25 18 16|131 20 15 20 18|137 27 18 28 9
|148 23 18 33 10|160 17 12 32 12|170 15 12 23 20|180 18 14 28 15|187 20 17 37 10|195 28 20 50 25|203 35 25 55 28
|208 47 20 67 20|215 53 20 63 18|220 45 20 83 25|228 60 57 90 30|235 70 70 123 35|241 74 72 148 40|246 95 70 143 60
|252 107 70 162 150|260 127 70 172 150|262 127 70 196 150|265 100 68 140 134|270 102 80 148 135|277 107 85 167 138|283 85 80 155 135
|290 85 65 145 110|298 75 70 152 140|307 83 60 142 118|315 73 68 140 130|322 65 65 143 120|330 63 55 108 100
|335 55 45 88 70|340 43 42 53 52|348 40 40 53 51|358 52 48 60 56|370 58 54 73 66|380 61 58 68 66|388 61 60 68 60
|395 60 58 52 50|405 50 45 46 35|412 33 30 38 22|418 25 10 23 20|425 20 17 18 12|432 12 8 10 8|440 5 4 5 4|455 5 3 6 3
|465 2 1 2 1|480 3 1 3 1|505 1 0 1 0|508 12 8 8 5|515 20 17 20 15|521 44 30 28 20|527 22 18 20 17|535 22 18 14 13
|548 34 16 18 15|558 27 18 30 22|566 20 16 22 16|575 22 15 20 14|585 24 16 24 18|595 20 16 25 20|605 25 22 28 24
|612 27 23 32 28|622 27 14 35 25|640 30 12 42 20|648 29 12 40 28|655 28 10 33 27|665 22 10 26 20|675 17 8 18 10
|685 8 4 10 4|695 6 3 8 2|710 5 2 6 3|722 7 3 6 3|737 9 3 6 2|745 3 2 4 1|770 2 1 2 1|840 1 0 1 0` },
  { start: 670, data: `0 0 0 0 0|43 1 0 1 0|50 10 3 10 3|55 12 4 13 6|80 10 4 13 5|100 11 4 15 5|125 15 4 18 5|145 16 4 22 4|170 17 4 22 4
|200 17 4 20 4|230 17 5 18 8|255 14 4 18 10|280 20 8 26 8|295 30 13 30 12|303 25 13 35 12|315 28 15 30 10|325 20 15 20 8
|333 8 3 10 3|350 8 3 14 3|362 16 8 20 10|375 24 20 30 14|383 40 30 45 30|390 48 35 55 28|405 40 32 52 25
|415 35 30 50 28|421 42 38 40 12|427 45 40 65 20|435 62 50 74 55|450 62 40 63 50|465 70 40 65 45|480 68 38 62 40
|490 78 48 72 35|503 83 50 80 45|515 84 44 82 65|522 90 44 92 60|530 68 55 80 65|545 68 48 78 65|558 53 40 68 40
|570 38 36 62 40|580 45 38 62 30|595 50 45 75 50|607 63 58 84 50|615 63 55 80 75|622 58 50 70 68|628 38 17 46 17
|640 36 28 47 32|655 37 25 42 25|670 40 20 50 14|685 40 25 52 35|700 35 25 51 20|715 37 15 45 12|725 36 32 45 20
|740 42 35 63 35|755 52 33 70 40|770 57 45 78 45|795 65 48 82 40|805 56 50 70 30|820 65 50 93 60|830 55 50 80 45
|842 50 40 60 30|848 33 30 50 48|860 35 32 42 40|870 33 32 58 55|877 48 40 80 70|890 65 60 115 110|897 78 65 125 115
|905 68 65 112 108|912 83 76 118 110|920 76 68 130 115|940 80 70 127 115|965 85 75 133 118|985 82 78 125 122
|997 92 85 128 120|1008 105 100 155 140|1018 120 115 175 165|1030 128 125 175 160|1042 137 130 175 170
|1050 128 125 172 168|1058 130 120 174 165|1065 105 95 145 140|1072 90 85 75 65|1078 50 45 35 30|1085 20 18 20 15
|1100 15 8 10 8|1115 6 5 6 4|1130 3 2 3 2|1150 3 2 3 2|1153 30 25 27 20|1157 64 45 45 40|1165 56 30 52 45
|1170 25 20 30 22|1175 60 50 62 50|1183 75 70 90 85` },
  { start: 1040, data: `75 122 122 130 130|80 140 140 240 240|85 217 217 279 275|92 228 225 246 240|97 207 205 205 200|105 193 190 158 155
|112 165 163 155 153|118 160 155 163 156|125 141 140 167 157|132 117 117 150 148|140 128 126 167 157|150 136 134 176 172
|158 150 145 200 195|165 150 140 175 170|173 130 128 150 147|180 133 127 136 134|187 163 150 155 145|195 163 161 168 166
|203 185 183 193 190|213 198 194 206 204|222 206 204 235 230|230 220 216 263 260|238 233 230 293 290|243 222 220 306 303
|246 255 253 326 323|250 305 300 357 357|256 357 357 357 357|272 357 357 357 357|276 280 280 345 340|281 300 290 323 320
|283 312 305 300 295|287 178 178 233 230|290 82 80 126 120|293 57 55 63 60|296 45 43 33 30|301 69 60 72 50|305 52 50 60 50
|308 24 22 33 30|312 37 25 42 25|318 33 20 30 15|323 18 16 12 9|330 10 9 15 11|337 8 8 14 12|343 28 26 33 30
|346 70 70 68 68|350 95 95 93 93|353 140 140 130 130|357 190 190 155 155|361 292 292 325 325|363 357 357 357 357
|366 200 165 200 175|368 165 165 173 173|370 117 117 120 120|373 105 105 103 103|376 73 73 118 115|380 95 95 110 105
|384 152 152 213 213|388 197 197 260 260|391 255 255 350 350|394 322 322 357 357|398 320 315 335 330|402 302 300 353 350
|405 327 325 353 350|408 255 255 357 344|413 245 240 357 345|418 228 228 338 335|421 265 265 357 340|424 327 327 342 340
|427 357 357 300 285|430 357 357 320 315|437 357 357 343 340|442 352 350 300 277|447 357 357 345 340|453 357 353 357 357
|462 357 350 357 357|466 357 357 357 357|468 297 297 320 318|472 255 255 290 288|475 255 255 222 220|479 213 213 205 203
|485 205 203 190 188|490 195 183 178 155|493 195 190 180 155|496 133 133 135 130|499 85 82 115 110|505 85 78 153 110
|511 90 78 107 100|520 88 70 127 95|527 83 68 99 93|533 83 68 80 38|540 53 50 60 55|550 58 45 67 60|558 45 42 60 35
|565 30 28 50 20|570 27 24 42 15|577 25 12 35 8|583 11 9 20 6|590 8 6 15 6|600 6 3 8 4|610 4 2 4 2|620 2 1 2 1
|650 2 1 2 1|700 1 1 1 0|735 1 0 1 0` }
]

const up = new Array(WIDTH).fill(0)
const down = new Array(WIDTH).fill(0)

bursts.forEach((burst) => {
  const points = burst.data.split('|').map((p) => p.trim().split(' ').map(Number))
  for (let i = 0; i < points.length - 1; i++) {
    const a = points[i]
    const b = points[i + 1]
    for (let s = a[0]; s < b[0]; s++) {
      const x = burst.start + Math.floor(s / 3)
      const t = (s - a[0]) / (b[0] - a[0])
      const at = (n) => a[n] + (b[n] - a[n]) * t
      // teeth of the comb: every other column is a peak
      const noise = Math.abs(Math.sin(x * 12.9898) * 43758.5453) % 1
      const tooth = x % 2 ? 0.75 + noise * 0.25 : noise * 0.2
      up[x] = at(2) + (at(1) - at(2)) * tooth
      down[x] = at(4) + (at(3) - at(4)) * tooth
    }
  }
  // measured peaks keep their full height
  points.forEach((p) => {
    const x = burst.start + Math.floor(p[0] / 3)
    up[x] = Math.max(up[x], p[1])
    down[x] = Math.max(down[x], p[3])
  })
})

let outline = `M0 ${MID}`
for (let x = 0; x < WIDTH; x++) {
  outline += `V${MID - Math.round(up[x])}H${x + 1}`
}
for (let x = WIDTH - 1; x >= 0; x--) {
  outline += `V${MID + 1 + Math.round(down[x])}H${x}`
}
outline += 'Z'

function add(parent, name, attrs, text) {
  const el = document.createElementNS(NS, name)
  Object.keys(attrs).forEach((key) => el.setAttribute(key, attrs[key]))
  if (text) el.textContent = text
  parent.appendChild(el)
  return el
}

const edge = Math.round(WIDTH * SELECTED / LENGTH)
const level = (db) => MID * Math.pow(10, -db / 20)
const marks = [0, 1, 2, 3, 4, 5, 7, 9, 12, 15, 18, 21, 27]

// main view
const wave = document.querySelector('#wave')
let grid = ''
for (let i = 1; i < 33; i++) {
  grid += `M${Math.round(i * WIDTH / LENGTH / 10)}.5 0V${HEIGHT}`
}
marks.forEach((db) => {
  grid += `M0 ${Math.round(MID - level(db))}.5H${WIDTH}M0 ${Math.round(MID + level(db))}.5H${WIDTH}`
})
const parts = [
  { id: 'sel', x: 0, w: edge, bg: '#f4f4ff', line: '#cde3cd', fill: '#264236', zero: '#4a2626' },
  { id: 'rest', x: edge, w: WIDTH - edge, bg: '#000', line: '#053205', fill: '#45dc98', zero: '#7f9a64' }
]
parts.forEach((part) => {
  const clip = add(wave, 'clipPath', { id: part.id })
  add(clip, 'rect', { x: part.x, y: 0, width: part.w, height: HEIGHT })
  const g = add(wave, 'g', { 'clip-path': `url(#${part.id})`, 'shape-rendering': 'crispEdges' })
  add(g, 'rect', { x: part.x, y: 0, width: part.w, height: HEIGHT, fill: part.bg })
  add(g, 'path', { d: grid, stroke: part.line, fill: 'none' })
  add(g, 'path', { d: outline, fill: part.fill })
  if (part.id === 'sel') {
    add(g, 'path', { d: `M0 ${MID}.5H${WIDTH}`, stroke: part.zero })
    add(g, 'path', { d: `M100 ${MID}.5H350`, stroke: '#1c3027' })
  } else {
    add(g, 'path', { d: `M0 ${MID}.5H685`, stroke: part.zero })
  }
})

// overview strip
const overview = document.querySelector('#overview')
const shade = add(overview, 'linearGradient', { id: 'shade', x1: 0, y1: 0, x2: 0, y2: 1 })
add(shade, 'stop', { offset: 0, 'stop-color': '#8fe0bd' })
add(shade, 'stop', { offset: 1, 'stop-color': '#5ea688' })
const clip = add(overview, 'clipPath', { id: 'ov-sel' })
add(clip, 'rect', { x: 0, y: 0, width: edge, height: HEIGHT })
add(overview, 'rect', { x: 0, y: MID - 14, width: WIDTH, height: 28, fill: '#73b898' })
add(overview, 'path', { d: outline, fill: 'url(#shade)' })
const dark = add(overview, 'g', { 'clip-path': 'url(#ov-sel)', fill: '#6b7f78' })
add(dark, 'rect', { x: 0, y: MID - 14, width: WIDTH, height: 28 })
add(dark, 'path', { d: outline })

// time ruler
const ruler = document.querySelector('#ruler')
const tick = (svg, x1, y1, x2, y2) => add(svg, 'line', { x1, y1, x2, y2, class: 'tick' })
add(ruler, 'text', { x: 3, y: 14, class: 'in-selection' }, 'hms')
for (let i = 1; i < 65; i++) {
  const t = i / 20
  if (t > LENGTH) break
  const x = (t / LENGTH * 100) + '%'
  tick(ruler, x, i % 2 ? 20 : 17, x, 24)
  if (i % 2 === 0) {
    add(ruler, 'text', { x, y: 14, 'text-anchor': 'middle', class: t < SELECTED ? 'in-selection' : '' }, t.toFixed(1))
  }
}

// dB scale
const scale = document.querySelector('#scale')
const steps = [0.25, 0.25, 0.25, 0.25, 0.25, 0.5, 0.5, 1, 1, 1, 1, 1]
const percent = (v) => (v / HEIGHT * 100) + '%'
add(scale, 'text', { x: 8, y: 12 }, 'dB')
tick(scale, 0, percent(MID), 4, percent(MID))
add(scale, 'text', { x: 8, y: percent(MID), dy: 4 }, '-∞')
marks.forEach((db, i) => {
  [-1, 1].forEach((side) => {
    const y = percent(MID + side * level(db))
    tick(scale, 0, y, 4, y)
    if (db) add(scale, 'text', { x: 8, y, dy: 4 }, '-' + db)
    for (let m = db + steps[i]; m < marks[i + 1]; m += steps[i]) {
      const my = percent(MID + side * level(m))
      tick(scale, 0, my, 2, my)
    }
  })
})

// level meter scale
const meter = document.querySelector('#meter-scale')
for (let db = 60; db >= 0; db--) {
  const x = (0.1 + (60 - db) / 60 * 99) + '%'
  tick(meter, x, 0, x, db % 3 ? 2 : 4)
  if (db === 60) add(meter, 'text', { x: 0, y: 14 }, 'dB')
  else if (db % 3 === 0) add(meter, 'text', { x, y: 14, 'text-anchor': 'middle' }, db ? '-' + db : '0')
}
```
